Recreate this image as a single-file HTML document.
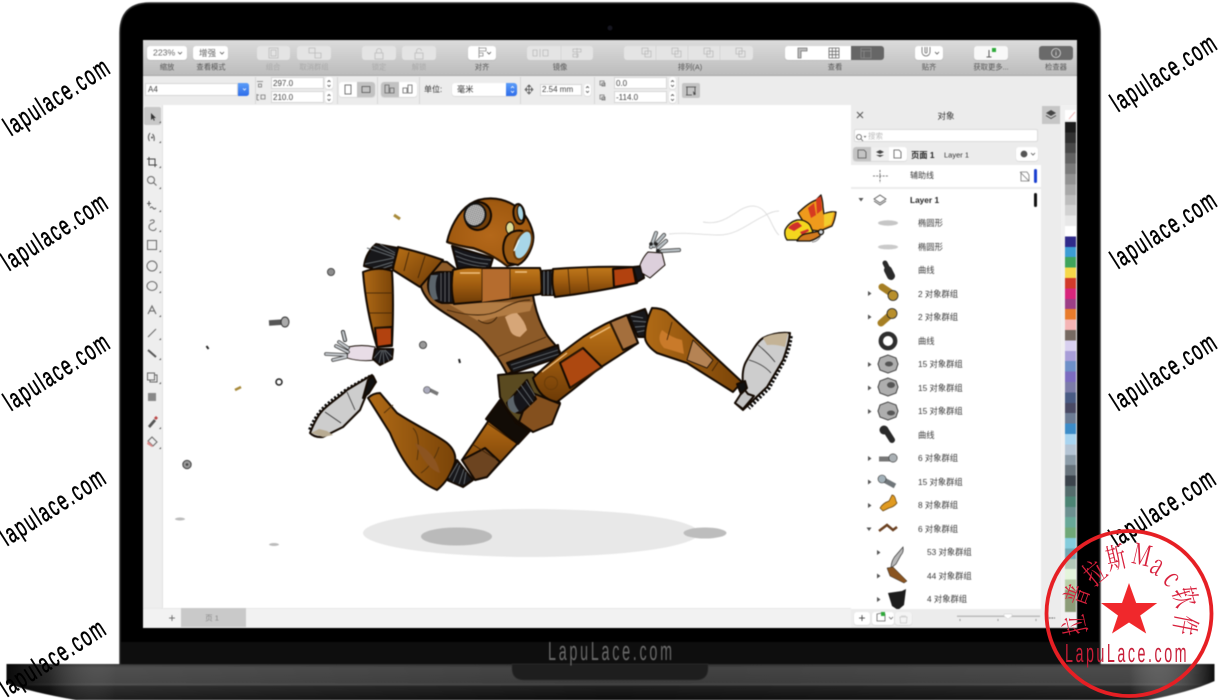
<!DOCTYPE html>
<html><head><meta charset="utf-8"><style>
html,body{margin:0;padding:0;background:#fff}
#p{position:relative;width:1221px;height:700px;overflow:hidden;background:#fff;font-family:"Liberation Sans","Noto Sans CJK SC",sans-serif}
#p div,#p span{position:absolute}
#ui{position:absolute;left:0;top:0;width:1221px;height:700px;filter:blur(.4px)}
.l,.c{line-height:1;white-space:nowrap;font-size:8.5px;color:#3a3a3a}
.l{transform:translateY(-50%)}
.c{transform:translate(-50%,-50%)}
.s{font-size:7.3px;color:#555}
.d{color:#a8a8a8}
.b{background:#f6f6f6;border-radius:3px;box-shadow:0 .5px 1px rgba(0,0,0,.15)}
.g{background:#e4e4e4;border-radius:3px}
.i{background:#fff;border:.5px solid #d6d6d6;box-sizing:border-box}
.v{background:#d8d8d8;width:1px}
svg{position:absolute;left:0;top:0}
</style></head><body><div id="p">
<div id="ui">
<svg width="1221" height="700" viewBox="0 0 1221 700">
<defs>
<linearGradient id="base" x1="0" y1="0" x2="0" y2="1">
<stop offset="0" stop-color="#2b2b2b"/><stop offset=".1" stop-color="#424242"/><stop offset=".52" stop-color="#3a3a3a"/><stop offset=".57" stop-color="#484848"/><stop offset=".62" stop-color="#1f1f1f"/><stop offset="1" stop-color="#0c0c0c"/>
</linearGradient>
<linearGradient id="lend" x1="0" y1="0" x2="1" y2="0">
<stop offset="0" stop-color="#000" stop-opacity=".85"/><stop offset=".035" stop-color="#000" stop-opacity=".35"/><stop offset=".09" stop-color="#fff" stop-opacity=".07"/><stop offset=".5" stop-color="#fff" stop-opacity="0"/><stop offset=".93" stop-color="#fff" stop-opacity=".05"/><stop offset="1" stop-color="#000" stop-opacity=".8"/>
</linearGradient>
</defs>
<path d="M6.5 664H1214.5V681Q1190 692 1148 700H76Q30 692 6.5 683Z" fill="url(#base)"/>
<path d="M6.5 664H1214.5V681Q1190 692 1148 700H76Q30 692 6.5 683Z" fill="url(#lend)"/>
<path d="M120 664V33Q120 3 150 3H1070Q1100 3 1100 33V664Z" fill="#000" stroke="#2c2c2c" stroke-width="1.500"/>
<rect x="121" y="642" width="978" height="22" fill="#0e0e0e"/>
<path d="M512 664H708V668Q708 680 696 680H524Q512 680 512 668Z" fill="#1e1e1e" stroke="#2e2e2e" stroke-width=".7"/>
<circle cx="610" cy="28" r="2.500" fill="#15151f"/>
</svg>

<!-- screen -->
<div style="left:143px;top:40px;width:934px;height:35px;background:linear-gradient(#dcdcdc,#bcbcbc)"></div>
<div style="left:143px;top:75px;width:934px;height:30px;background:#ececec;border-top:.5px solid #aaa;box-sizing:border-box"></div>
<div style="left:143px;top:105px;width:20px;height:503px;background:#eeeeee;border-right:1px solid #e2e2e2;box-sizing:border-box"></div>
<div style="left:163px;top:105px;width:688px;height:503px;background:#fff"></div>
<div style="left:143px;top:608px;width:708px;height:20px;background:#f2f2f2;border-top:1px solid #e8e8e8;box-sizing:border-box"></div>
<div style="left:181px;top:608px;width:65px;height:19px;background:#c9c9c9"></div>
<span class="c" style="left:172px;top:618px;font-size:12px;color:#666">+</span>
<span class="c d" style="left:212px;top:618px;font-size:7.5px;color:#888">页 1</span>
<div style="left:851px;top:105px;width:190px;height:523px;background:#fff"></div>
<div style="left:851px;top:105px;width:190px;height:20px;background:#ececec"></div>
<div style="left:851px;top:125px;width:190px;height:40px;background:#ececec"></div>
<div style="left:851px;top:187px;width:190px;height:2px;background:#ececec"></div>
<div style="left:1041px;top:105px;width:36px;height:523px;background:#ececec"></div>
<div style="left:1042px;top:106px;width:18px;height:18px;background:#c6c6c6"></div>
<div style="left:1061px;top:105px;width:16px;height:523px;background:#f0f0f0"></div>

<!-- toolbar buttons -->
<div class="b" style="left:147px;top:46px;width:40px;height:14px;background:#fff"></div>
<span class="l" style="left:153px;top:53px;font-size:8.7px;color:#666">223%</span>
<div class="b" style="left:193px;top:46px;width:35px;height:14px;background:#fff"></div>
<span class="l" style="left:199px;top:53px;font-size:8.5px;color:#666">增强</span>
<div class="g" style="left:257px;top:46px;width:33px;height:14px"></div>
<div class="g" style="left:297px;top:46px;width:34px;height:14px"></div>
<div class="g" style="left:362px;top:46px;width:34px;height:14px"></div>
<div class="g" style="left:402px;top:46px;width:34px;height:14px"></div>
<div class="b" style="left:468px;top:46px;width:28px;height:14px;background:#fff"></div>
<div class="g" style="left:527px;top:46px;width:66px;height:14px"></div>
<div class="g" style="left:624px;top:46px;width:129px;height:14px"></div>
<div class="b" style="left:785px;top:46px;width:66px;height:14px;background:#fff;border-radius:3px 0 0 3px"></div>
<div style="left:851px;top:46px;width:33px;height:14px;background:#666;border-radius:0 3px 3px 0"></div>
<div class="b" style="left:915px;top:46px;width:28px;height:14px;background:#fff"></div>
<div class="b" style="left:974px;top:46px;width:34px;height:14px;background:#f8f8f8"></div>
<div style="left:1039px;top:46px;width:34px;height:14px;background:#6a6a6a;border-radius:3px"></div>

<span class="c s" style="left:167px;top:67px">缩放</span>
<span class="c s" style="left:211px;top:67px">查看模式</span>
<span class="c s d" style="left:273px;top:67px">组合</span>
<span class="c s d" style="left:314px;top:67px">取消群组</span>
<span class="c s d" style="left:379px;top:67px">锁定</span>
<span class="c s d" style="left:419px;top:67px">解锁</span>
<span class="c s" style="left:482px;top:67px">对齐</span>
<span class="c s" style="left:560px;top:67px">镜像</span>
<span class="c s" style="left:690px;top:67px">排列(A)</span>
<span class="c s" style="left:835px;top:67px">查看</span>
<span class="c s" style="left:929px;top:67px">贴齐</span>
<span class="c s" style="left:991px;top:67px">获取更多...</span>
<span class="c s" style="left:1056px;top:67px">检查器</span>

<!-- property bar -->
<div class="i" style="left:145px;top:83px;width:93px;height:12.5px"></div>
<span class="l" style="left:148px;top:90px;font-size:8px;color:#444">A4</span>
<div style="left:238px;top:83px;width:11px;height:13px;background:linear-gradient(#5c9df8,#2e6dea);border-radius:0 2.5px 2.5px 0"></div>
<div class="v" style="left:255px;top:77px;height:27px"></div>
<div class="i" style="left:271px;top:77px;width:53px;height:12px"></div>
<div class="i" style="left:271px;top:91px;width:53px;height:12px"></div>
<span class="l" style="left:273px;top:83.5px;font-size:8px;color:#444">297.0</span>
<span class="l" style="left:273px;top:97.5px;font-size:8px;color:#444">210.0</span>
<div class="v" style="left:337px;top:77px;height:27px"></div>
<div class="b" style="left:339px;top:82px;width:36px;height:15px;background:#fff"></div>
<div style="left:357px;top:82px;width:18px;height:15px;background:#c2c2c2;border-radius:0 3px 3px 0"></div>
<div class="v" style="left:377px;top:77px;height:27px"></div>
<div class="b" style="left:381px;top:82px;width:36px;height:15px;background:#fff"></div>
<div style="left:381px;top:82px;width:18px;height:15px;background:#c2c2c2;border-radius:3px 0 0 3px"></div>
<div class="v" style="left:419px;top:77px;height:27px"></div>
<span class="l" style="left:424px;top:90px;font-size:8px;color:#333">单位:</span>
<div class="b" style="left:452px;top:83px;width:65px;height:13px;background:#fff"></div>
<span class="l" style="left:457px;top:90px;font-size:8.2px;color:#333">毫米</span>
<div style="left:506px;top:83px;width:11px;height:13px;background:linear-gradient(#5c9df8,#2e6dea);border-radius:0 3px 3px 0"></div>
<div class="v" style="left:520px;top:77px;height:27px"></div>
<div class="i" style="left:540px;top:84px;width:42px;height:12px"></div>
<span class="l" style="left:542px;top:90px;font-size:8px;color:#444">2.54 mm</span>
<div class="v" style="left:594px;top:77px;height:27px"></div>
<div class="i" style="left:614px;top:77px;width:53px;height:12px"></div>
<div class="i" style="left:614px;top:91px;width:53px;height:12px"></div>
<span class="l" style="left:616px;top:83.5px;font-size:8px;color:#444">0.0</span>
<span class="l" style="left:616px;top:97.5px;font-size:8px;color:#444">-114.0</span>
<div class="v" style="left:678px;top:77px;height:27px"></div>
<div style="left:682px;top:83px;width:18px;height:15px;background:#c4c4c4;border-radius:2px"></div>
<div class="b" style="left:325px;top:77px;width:8px;height:12px;background:#fff"></div>
<div class="b" style="left:325px;top:91px;width:8px;height:12px;background:#fff"></div>
<div class="b" style="left:584px;top:84px;width:7px;height:12px;background:#fff"></div>
<div class="b" style="left:669px;top:77px;width:7px;height:12px;background:#fff"></div>
<div class="b" style="left:669px;top:91px;width:7px;height:12px;background:#fff"></div>

<!-- toolbox selected -->
<div style="left:144px;top:107px;width:17px;height:18px;background:#c8c8c8;border-radius:2px"></div>

<!-- docker -->
<span class="c" style="left:946px;top:115.5px;font-size:8.5px;color:#333">对象</span>
<div style="left:854px;top:129px;width:184px;height:13px;background:#fff;border:.5px solid #dadada;box-sizing:border-box;border-radius:2px"></div>
<span class="l" style="left:868px;top:136px;font-size:7.5px;color:#bbb">搜索</span>
<div class="b" style="left:853px;top:147px;width:54px;height:14px;background:#fff"></div>
<div style="left:853px;top:147px;width:18px;height:14px;background:#c4c4c4;border-radius:3px 0 0 3px"></div>
<div style="left:871px;top:147px;width:18px;height:14px;background:#f0f0f0"></div>
<span class="l" style="left:911px;top:155px;font-size:8.3px;font-weight:bold;color:#222">页面 1</span>
<span class="l" style="left:944px;top:155px;font-size:7.5px;color:#333">Layer 1</span>
<div class="b" style="left:1016px;top:147px;width:22px;height:14px;background:#fff"></div>
<span class="l" style="left:910px;top:176px;font-size:8px">辅助线</span>
<div style="left:1034px;top:169px;width:3px;height:14px;background:#1a3fd0;border-radius:2px"></div>
<span class="l" style="left:910px;top:200px;font-size:8.3px;font-weight:bold;color:#222">Layer 1</span>
<div style="left:1034px;top:193px;width:3px;height:14px;background:#111;border-radius:2px"></div>
<span class="l" style="left:918px;top:223px;font-size:8.3px">椭圆形</span>
<span class="l" style="left:918px;top:246.500px;font-size:8.3px">椭圆形</span>
<span class="l" style="left:918px;top:270px;font-size:8.3px">曲线</span>
<span class="l" style="left:918px;top:293.500px;font-size:8.3px">2 对象群组</span>
<span class="l" style="left:918px;top:317px;font-size:8.3px">2 对象群组</span>
<span class="l" style="left:918px;top:340.500px;font-size:8.3px">曲线</span>
<span class="l" style="left:918px;top:364px;font-size:8.3px">15 对象群组</span>
<span class="l" style="left:918px;top:387.500px;font-size:8.3px">15 对象群组</span>
<span class="l" style="left:918px;top:411px;font-size:8.3px">15 对象群组</span>
<span class="l" style="left:918px;top:434.500px;font-size:8.3px">曲线</span>
<span class="l" style="left:918px;top:458px;font-size:8.3px">6 对象群组</span>
<span class="l" style="left:918px;top:481.500px;font-size:8.3px">15 对象群组</span>
<span class="l" style="left:918px;top:505px;font-size:8.3px">8 对象群组</span>
<span class="l" style="left:918px;top:528.500px;font-size:8.3px">6 对象群组</span>
<span class="l" style="left:927px;top:552px;font-size:8.3px">53 对象群组</span>
<span class="l" style="left:927px;top:575.500px;font-size:8.3px">44 对象群组</span>
<span class="l" style="left:927px;top:599px;font-size:8.3px">4 对象群组</span>

<!-- palette -->
<div style="left:1065px;top:110px;width:11px;height:10px;background:#fff"></div>
<div style="left:1065px;top:122px;width:11px;height:490px;background:linear-gradient(#1a1a1a 0 10.4px,#303030 0 20.8px,#484848 0 31.2px,#626262 0 41.6px,#7a7a7a 0 52px,#929292 0 62.4px,#a8a8a8 0 72.8px,#bdbdbd 0 83.2px,#d2d2d2 0 93.6px,#e8e8e8 0 104px,#ffffff 0 114.4px,#2f2a8a 0 124.8px,#3c9dd4 0 135.2px,#3fa45c 0 145.6px,#f6d84a 0 156px,#d23a2a 0 166.4px,#d8257c 0 176.8px,#9c3e86 0 187.2px,#e87c2c 0 197.6px,#f4b4b4 0 208px,#766a62 0 218.4px,#d8d0f0 0 228.8px,#a89ed8 0 239.2px,#6e90c8 0 249.6px,#7c6cc0 0 260px,#7c7ca8 0 270.4px,#4a5c84 0 280.8px,#4a4a64 0 291.2px,#6c7c94 0 301.6px,#3c8cc8 0 312px,#a8d4f0 0 322.4px,#b4c4d4 0 332.8px,#8c9ca8 0 343.2px,#68747c 0 353.6px,#3c444c 0 364px,#546c6c 0 374.4px,#4c8474 0 384.8px,#6c9090 0 395.2px,#68a898 0 405.6px,#70a878 0 416px,#84ccdc 0 426.4px,#70a8b4 0 436.8px,#b4c8b8 0 447.2px,#e4f4dc 0 457.6px,#b8d0a8 0 468px,#8c9c78 0 490px)"></div>

<svg width="1221" height="700" viewBox="0 0 1221 700">
<defs>
<linearGradient id="g1" x1="0" y1="0" x2="0" y2="1"><stop offset="0" stop-color="#c27a1c"/><stop offset=".45" stop-color="#a25e10"/><stop offset="1" stop-color="#6c3a06"/></linearGradient>
<linearGradient id="g2" x1="0" y1="0" x2="1" y2="0"><stop offset="0" stop-color="#b06a16"/><stop offset="1" stop-color="#7a4408"/></linearGradient>
<linearGradient id="g3" x1="0" y1="0" x2="1" y2="1"><stop offset="0" stop-color="#b87016"/><stop offset="1" stop-color="#6a3806"/></linearGradient>
<radialGradient id="hg" cx=".5" cy=".55" r=".65"><stop offset="0" stop-color="#b4681a"/><stop offset=".75" stop-color="#a15a10"/><stop offset="1" stop-color="#7a4408"/></radialGradient>
<pattern id="mesh" width="2" height="2" patternUnits="userSpaceOnUse"><rect width="2" height="2" fill="#8a8a8a"/><rect width="1.200" height="1.200" fill="#dedede"/></pattern>
</defs>

<!-- toolbar icons -->
<g fill="none" stroke="#8c8c8c" stroke-width=".8">
<path d="M182 52l-2 2-2-2M224 52l-2 2-2-2M491 52l-2 2-2-2M939 52l-2 2-2-2" stroke="#555"/>
<g stroke="#bcbcbc"><rect x="269" y="48" width="9" height="10"/><rect x="271" y="50" width="5" height="6"/>
<path d="M309 48h6v5h-6zM315 53h6v5h-6z"/><rect x="375" y="53" width="8" height="6"/><path d="M376.500 53v-2a2.500 2.500 0 0 1 5 0v2"/>
<rect x="415" y="53" width="8" height="6"/><path d="M416.500 53v-2a2.500 2.500 0 0 1 5 0"/>
<path d="M540 49v8M543 50h5v6h-5zM537 50h-4v6h4zM577 48v10M573 49h8v3h-8zM573 54h5v3h-5z"/>
<path d="M561 46v14" stroke="#d2d2d2"/>
<path d="M642 48h6v6h-6zM645 51h6v6h-6zM672 48h6v6h-6zM675 51h6v6h-6zM704 48h6v6h-6zM707 51h6v6h-6zM736 48h6v6h-6zM739 51h6v6h-6z"/>
<path d="M656 46v14M688 46v14M720 46v14" stroke="#d2d2d2"/></g>
<path d="M479 47v11M479 48h7v3h-7zM479 53h4v3h-4z"/>
<path d="M798 48h9v3h-6v7h-3z" fill="#bbb" stroke="#777"/>
<path d="M829 48h10v10h-10zM829 51.300h10M829 54.700h10M832.300 48v10M835.700 48v10" stroke="#666"/>
<path d="M861 48h10v10h-10zM861 51h10M864 51v7" stroke="#8a8a8a"/>
<path d="M922 47v5a4 4 0 0 0 8 0v-5M925 47v5a1 1 0 0 0 2 0v-5" stroke="#666"/>
<path d="M989 50v7M986.500 57h5" stroke="#333"/>
<circle cx="1056" cy="53" r="4.500" stroke="#ddd"/><path d="M1056 52v3.500M1056 50.500v.8" stroke="#ddd"/>
</g>
<rect x="992" y="48" width="4" height="4" fill="#2eaa3a"/>
<!-- property bar icons -->
<g fill="none" stroke="#777" stroke-width=".8">
<path d="M243 88.500l1.500 1.500 1.500-1.500" stroke="#fff"/>
<path d="M511 88l1.500-1.500 1.500 1.500M511 91l1.500 1.500 1.500-1.500" stroke="#fff"/>
<path d="M257 81.500h6M258.500 84h3v3h-3zM257 94v6M259 95h-2M259 100h-2M261 95h4v4h-4z"/>
<path d="M327.500 82l1.500-1.500 1.500 1.500M327.500 85l1.500 1.500 1.500-1.500M327.500 96l1.500-1.500 1.500 1.500M327.500 99l1.500 1.500 1.500-1.500M586 88l1.500-1.500 1.500 1.500M586 91l1.500 1.500 1.500-1.500M671 82l1.500-1.500 1.500 1.500M671 85l1.500 1.500 1.500-1.500M671 96l1.500-1.500 1.500 1.500M671 99l1.500 1.500 1.500-1.500" stroke="#555"/>
<rect x="345" y="85" width="6" height="9" stroke="#555"/><rect x="362" y="86.500" width="8" height="6" stroke="#555"/>
<path d="M385 85h4v8h-4zM390 88h4v5h-4zM403 88h4v5h-4zM408 85h4v8h-4z" stroke="#666"/>
<path d="M529 86.500v6M526 89.500h6M529 85l-1.500 1.500h3zM529 94l-1.500-1.500h3zM525 89.500l1.500-1.500v3zM533 89.500l-1.500-1.500v3z" stroke="#555"/>
<path d="M600 81h4v4h-4zM602 83h3v3h-3zM600 95h4v4h-4zM602 97h3v3h-3z"/>
<path d="M686 87h10M687 87v8M695 87v8M686 95h6" stroke="#444"/><path d="M693 91l3 3-1.500.2-.8 1.300z" fill="#444" stroke="none"/>
</g>

<!-- toolbox icons -->
<g fill="none" stroke="#666" stroke-width="1">
<path d="M151 113l0 7 1.800-1.600 1 2.400 1-.4-1-2.400 2.200 0z" fill="#333" stroke="none"/>
<path d="M150 133q-3 4-.5 8M154 141q1-4-1.500-7" stroke="#555"/><circle cx="152" cy="137.500" r="1" fill="#555" stroke="none"/>
<path d="M149 157v8h8M147 159h8v8" stroke="#444"/>
<circle cx="151" cy="180" r="3.500"/><path d="M153.500 182.500l3 3"/>
<path d="M149 201v5M147 203.500h4M150 208q2-2 3 0t3 0" stroke="#555"/>
<path d="M156 228c0 4-7 3-7-1s4-3 5-5-2-3-4-1"/>
<rect x="147.500" y="240.500" width="9" height="9"/>
<circle cx="152" cy="266" r="5"/>
<ellipse cx="152" cy="286" rx="5" ry="4.500"/>
<path d="M148 314l4-8 4 8M149.500 311h5" stroke-width="1.100"/>
<path d="M148 337l8-8"/>
<path d="M148 350l8 7" stroke-width="2" stroke="#555"/>
<rect x="147.500" y="373" width="7" height="7" fill="#eee"/><path d="M155 375h2v7h-7v-2" />
<rect x="148" y="393" width="8" height="8" fill="#888" stroke="none"/>
<path d="M148 426l6-7 2 2-6 7z" fill="#555" stroke="none"/><path d="M154 418l2-2 2 2-2 2" fill="#b44" stroke="none"/>
<path d="M152 437l5 5-4 4-5-5z" fill="#eee"/><path d="M148 441l5 5-1 1-5-3z" fill="#d88" stroke="none"/>
</g>
<g fill="#555">
<path d="M161 123v-2l-2 2zM161 143v-2l-2 2zM161 168v-2l-2 2zM161 189v-2l-2 2zM161 212v-2l-2 2zM161 232v-2l-2 2zM161 252v-2l-2 2zM161 273v-2l-2 2zM161 293v-2l-2 2zM161 317v-2l-2 2zM161 340v-2l-2 2zM161 360v-2l-2 2zM161 384v-2l-2 2zM161 429v-2l-2 2zM161 449v-2l-2 2z"/>
</g>

<!-- docker icons -->
<path d="M857 112l6 6M863 112l-6 6" stroke="#555" fill="none"/>
<g fill="none" stroke="#555" stroke-width=".8">
<circle cx="859" cy="137" r="2.500"/><path d="M861 139l2 2M864 136l1 1 1-1"/>
<path d="M858 150h6l2 2v6h-8z"/><path d="M876 152l4-2 4 2-4 2zM876 155l4 2 4-2" fill="#444" stroke="none"/><path d="M894 150h5l2 2v6h-7z"/>
<circle cx="1024" cy="154" r="3" fill="#555"/><path d="M1031 153l2 2 2-2"/>
<path d="M873 176h15M880 170v13" stroke-dasharray="2 1.200"/>
<path d="M1021 172h6l2 3v6h-8zM1020 172l9 9" stroke="#777"/>
<path d="M874 199l6-4 6 4-6 4zM874 201l6 4 6-4" stroke="#555"/>
<path d="M1069 119l6-7" stroke="#e8a0a0"/>
<path d="M1046 113l5-3 5 3-5 3z" fill="#444" stroke="none"/><path d="M1046 115.500l5 3 5-3" stroke="#444"/>
</g>
<path d="M858.500 198h5l-2.500 3.500z" fill="#555"/>
<g fill="#555">
<path d="M868 291v5l3.500-2.500zM868 314.500v5l3.500-2.500zM868 362v5l3.500-2.500zM868 385.500v5l3.500-2.500zM868 409v5l3.500-2.500zM868 456v5l3.500-2.500zM868 479.500v5l3.500-2.500zM868 503v5l3.500-2.500zM877 550v5l3.500-2.500zM877 573.500v5l3.500-2.500zM877 597v5l3.500-2.500z"/>
<path d="M866.500 527.500h5l-2.500 3.500z"/>
</g>

<!-- thumbnails -->
<ellipse cx="888" cy="223" rx="10" ry="2.700" fill="#c6c6c6"/>
<ellipse cx="888" cy="247" rx="10" ry="2.400" fill="#cacaca"/>
<path d="M885 263l3 6" stroke="#2a2a2a" stroke-width="5" stroke-linecap="round"/><path d="M888 270l3 6" stroke="#2a2a2a" stroke-width="8" stroke-linecap="round"/>
<path d="M882 287l9 6" stroke="#a67f24" stroke-width="7" stroke-linecap="round"/><circle cx="893" cy="295.500" r="5" fill="#b88f2c" stroke="#222" stroke-width=".8"/>
<path d="M881 323l8-7" stroke="#a67f24" stroke-width="7" stroke-linecap="round"/><circle cx="892" cy="313.500" r="5" fill="#b88f2c" stroke="#222" stroke-width=".8"/>
<circle cx="888" cy="341" r="7.200" fill="none" stroke="#2d2d2d" stroke-width="4.400"/>
<g fill="#aeaeae" stroke="#333" stroke-width=".9">
<path d="M888 355l8 3 2 6-2 6-8 3-8-3-2-6 2-6z"/><path d="M888 378l8 3 2 6-2 6-8 3-8-3-2-6 2-6z"/><path d="M888 402l8 3 2 6-2 6-8 3-8-3-2-6 2-6z"/>
</g>
<g fill="#555"><ellipse cx="889" cy="364" rx="4" ry="2.500"/><ellipse cx="891" cy="385" rx="4" ry="3"/><ellipse cx="891" cy="413" rx="4" ry="2.500"/></g>
<path d="M885 429l7 11" stroke="#2a2a2a" stroke-width="6" stroke-linecap="round"/><circle cx="884" cy="430" r="4.500" fill="#2a2a2a"/>
<path d="M879 459h12" stroke="#777" stroke-width="5"/><circle cx="893" cy="458" r="4.200" fill="#aab0b4" stroke="#333" stroke-width=".6"/>
<path d="M884 480l11 6" stroke="#70767a" stroke-width="5"/><circle cx="882" cy="479" r="4" fill="#a2b0b8" stroke="#333" stroke-width=".6"/>
<path d="M880 508q3-5 9-7l3-6q3 0 4 6l1 2q-3 4-8 5l-6 3z" fill="#e09a20" stroke="#5b3a0a" stroke-width=".7"/>
<path d="M879 531l8-6 6 5 4-3" stroke="#6a4020" stroke-width="2.500" fill="none"/>
<path d="M891 568q0-8 6-14l6-7q1 5-2 8l-5 9z" fill="#b8b8b8" stroke="#333" stroke-width=".7"/>
<path d="M887 568l6-1 14 14-3 2-14-7z" fill="#8a5420" stroke="#222" stroke-width=".5"/>
<path d="M888 593l14-2 4-2-2 16-6 5-6-4z" fill="#1c1c1c"/>

<!-- shadows -->
<ellipse cx="531" cy="533" rx="168" ry="24" fill="#e8e8e8"/>
<ellipse cx="456.500" cy="536.500" rx="35.500" ry="9" fill="#bababa"/>
<ellipse cx="705" cy="533" rx="21.500" ry="5.500" fill="#bdbdbd"/>
<ellipse cx="180" cy="519" rx="5" ry="1.500" fill="#bbb"/>
<ellipse cx="274" cy="544.500" rx="5" ry="1.500" fill="#bbb"/>

<!-- debris -->
<path d="M269 323l15-1" stroke="#555" stroke-width="5.500"/><ellipse cx="285" cy="322" rx="4" ry="5" fill="#aaa" stroke="#333"/>
<path d="M394 215l6 4" stroke="#a88a3a" stroke-width="3"/>
<circle cx="331" cy="272" r="3.600" fill="#8c8c8c" stroke="#333" stroke-width=".8"/>
<path d="M206.500 346l2 3" stroke="#222" stroke-width="2"/>
<path d="M235 390l6-3" stroke="#a88a3a" stroke-width="2.500"/>
<circle cx="279" cy="382" r="3" fill="none" stroke="#222" stroke-width="1.500"/>
<path d="M430 390l8 4" stroke="#777" stroke-width="3.500"/><circle cx="427" cy="390" r="3.500" fill="#aab" stroke="#444" stroke-width=".6"/>
<circle cx="423" cy="345" r="3.600" fill="#999" stroke="#333" stroke-width=".8"/>
<path d="M459 359l1 4" stroke="#222" stroke-width="2"/>
<circle cx="187" cy="464.500" r="4.200" fill="#999" stroke="#333" stroke-width=".9"/>
<circle cx="187" cy="464.500" r="1.300" fill="#444"/>

<!-- butterfly swirls -->
<path d="M688 234c20-2 30 1 50 1 18 0 30-12 45-19 5-3 10-5 15-5" fill="none" stroke="#dcdcdc" stroke-width=".9" transform="translate(-19 0)"/>
<path d="M703 222c15 3 25-4 37-12 12-7 22-5 29 8 4 8 7 15 10 17" fill="none" stroke="#dcdcdc" stroke-width=".9"/>

<!-- butterfly -->
<g stroke="#17120a" stroke-width="1.300" stroke-linejoin="round">
<path d="M798 213q10-10 18-13l5-5q2 7 2 12l1 7q6-3 12-2-1 8-4 14l-12 5-10-1q-7-8-12-17z" fill="#ef9a1c"/>
<path d="M816 199l5-3 1 14-5 4zM808 208l6-5 2 12-5 3z" fill="#d63a20" stroke="none"/>
<path d="M824 214l10-2-3 12-7 3z" fill="#f2cd2c" stroke="none"/>
<path d="M785 230q4-8 12-10 8-1 13 5l3 7-16 8-10 0q-3-4-2-10z" fill="#f4d61e"/>
<path d="M788 228q4-5 10-6l4 4-8 5zM800 232l8-3 1 2-7 4z" fill="#cf2f2a" stroke="none"/>
<path d="M797 241q3-6 8-7l15-3 2 3q-5 5-12 7z" fill="#d27a1e"/>
<circle cx="821" cy="232" r="2.500" fill="#cfd6dd"/>
<path d="M812 242q6 0 9-7" fill="none" stroke="#777" stroke-width=".9"/>
</g>

<!-- ROBOT -->
<g stroke="#140a02" stroke-width="2" stroke-linejoin="round">

<!-- left rear leg (lower) + foot -->
<path d="M368 398q5-5 12-5l17 20c18 12 40 22 50 30 7 6 9 13 8 19-3 10-8 20-18 28-12-5-19-12-24-17-11-13-18-28-23-40z" fill="url(#g2)"/>
<path d="M384 413l9-8M413 428q8 8 4 32M421 473q12-8 18-26" fill="none" stroke="#51300a" stroke-width=".9"/>
<path d="M415 443q20 8 25 30-14-4-25-30z" fill="#8c5420" stroke="none"/>
<!-- foot left: teeth first -->
<path d="M310.500 430c3-8 8-15 12-20 8-8 20-17 30-23l18-10" fill="none" stroke="#0c0c0c" stroke-width="5" stroke-dasharray="2.200 1.800"/>
<path d="M310 433c4-10 8-18 13-23 8-8 18-14 24-20l25-15 3 7-8 11-7 17-17 17-20 10q-8 1-13-4z" fill="#cdcdcd" stroke-width="2"/>
<path d="M311 433l8-4 8 2 6 4-10 2z" fill="#b8ab92" stroke="none"/>
<path d="M325 412l16 11M347 392l8 18" fill="none" stroke="#333" stroke-width=".8"/>
<path d="M368 380l5-4 3 6-7 11-6 5z" fill="#111"/>

<!-- left knee ruffle -->
<path d="M447 480l10-20 16 20-10 7z" fill="#17171a"/>
<path d="M449 478l9-15M453 482l7-17M459 484l5-15M464 484l2-12" fill="none" stroke="#666c70" stroke-width=".9"/>

<!-- left thigh -->
<path d="M501 400l16 23 13 7-43 47-12 3-13-20 25-37z" fill="url(#g1)"/>
<path d="M475 480l-13-20 23-12 15 14-13 15z" fill="#6c4420"/>
<path d="M487 423l26 18M472 444l24 15" fill="none" stroke="#3a2006" stroke-width=".8"/>
<path d="M500 400l16 23 14 8-12 13-19-15-13-10z" fill="#120c06"/>

<!-- pelvis -->
<path d="M498 375l35-3 27 31c-6 14-14 25-27 27-12-3-23-14-33-33z" fill="#5a4a20"/>
<path d="M530 392l30 12-8 20-19 8-14-10z" fill="#84501e"/>

<!-- torso -->
<path d="M420 280c0-12 12-20 27-18l10 8h76c-3 20 2 45 14 65 5 7 11 12 13 17l-53 22c-7-14-17-28-29-39-16-13-38-23-48-33-6-7-10-14-10-22z" fill="#8c5a28"/>
<path d="M447 303l86-1-3 9-33 6-17 5z" fill="#b27c44" stroke="none"/>
<path d="M447 310q35 10 53 0 16-10 30-10M478 320q12 8 19-3M497 357l49-20M480 337q8 10 16 20" fill="none" stroke="#3a2006" stroke-width=".9"/>
<path d="M505 317q6-4 12-4 8 8 10 17l-7 7q-8-1-10-7z" fill="#d6a678" stroke="none"/>
<path d="M507 363l51-18 2 12-47 16z" fill="#17171a"/>
<path d="M511 365l47-15M513 369l46-15" stroke="#666c70" stroke-width=".9" fill="none"/>

<!-- neck -->
<path d="M452 246l41 12-4 13-31-1z" fill="#15151a"/>
<path d="M455 251q18 8 36 9M456 256q16 7 32 8M458 261q14 5 28 6" stroke="#666c70" stroke-width=".9" fill="none"/>

<!-- rear arm: shoulder plate -->
<path d="M398 247q22 5 45 13l-23 27-27-17q1-12 5-23z" fill="url(#g3)"/>
<path d="M409 252l-5 19M425 256l-7 22" fill="none" stroke="#3a2006" stroke-width=".8"/>

<!-- left shoulder ruffle -->
<path d="M393 268l-16 2-13-4q2-14 12-22l22 4z" fill="#17171a"/>
<path d="M394 258l-29 6M394 257l-27-9M395 255l-22-9M395 253l-15-9M393 262l-20 6M392 265l-11 4" stroke="#666c70" stroke-width="1" fill="none"/>

<!-- left forearm -->
<path d="M363 272q15-6 29-1 2 30 0 75l-15 1q-11-37-14-75z" fill="url(#g2)"/>
<path d="M375 328l17-1v18l-15 2z" fill="#b2420f"/>
<path d="M366 293h27M369 313h24M375 328h17" fill="none" stroke="#3a2006" stroke-width=".8"/>

<!-- left hand -->
<g stroke-width=".9">
<path d="M348 347q14-3 27 0v13q-14 2-28-2z" fill="#e8dde6"/>
<path d="M345 340l-2-8" stroke="#111" stroke-width="4" stroke-linecap="round"/><path d="M345 340l-2-8" stroke="#bfc4c8" stroke-width="2.500" stroke-linecap="round" fill="none"/>
<path d="M348 348l-9-6M348 352l-12-6M346 355l-20-1M346 357l-13 3" stroke="#222" stroke-width="3.600" stroke-linecap="round"/>
<path d="M348 348l-9-6M348 352l-12-6M346 355l-20-1M346 357l-13 3" stroke="#c4c8cc" stroke-width="2.300" stroke-linecap="round" fill="none"/>
</g>
<path d="M375 349l18 0-1 10-12 6-7-6z" fill="#15151a"/>
<path d="M381 350l-7 8M382 350l-3 13M383 350l1 14M384 350l5 11M385 350l7 7" stroke="#666c70" stroke-width=".9" fill="none"/>

<!-- shoulder socket -->
<path d="M428 285c0-9 5-13 12-13h14v31h-12c-8-2-14-9-14-18z" fill="#15151a"/>
<path d="M431 275c-3 8-3 20 3 25l4-1c-3-8-3-18 0-24z" fill="#5b646b" stroke="none"/>
<path d="M441 273v28M445 272v30M449 272v30" stroke="#666" stroke-width=".9" fill="none"/>

<!-- upper arm -->
<path d="M453 270q14-4 30-2l57 0q4 12 1 26l-40 6-47 4q-4-16-1-34z" fill="url(#g1)"/>
<path d="M482 269h28l1 29-29 4z" fill="#b56c2e" stroke="none"/>
<path d="M482 268v33M510 268v30" stroke="#3a2006" stroke-width=".8" fill="none"/>
<path d="M460 273h20M515 272h12" stroke="#f0c080" stroke-width="1.500" fill="none"/>

<!-- elbow ruffle -->
<path d="M541 271l14-1 1 25-14 0z" fill="#17171a"/>
<path d="M544 271v24M548 271v24M552 271v24" stroke="#666c70" stroke-width="1" fill="none"/>

<!-- right forearm -->
<path d="M553 269q40-3 80-2l4 16q-40 9-82 14c-3-9-3-20-2-28z" fill="url(#g1)"/>
<path d="M613 269l20-2 3 16-22 4z" fill="#b2420f"/>
<path d="M568 268l2 26M587 267l2 24" fill="none" stroke="#3a2006" stroke-width=".8"/>

<!-- right wrist + hand -->
<path d="M633 267l9-1 2 12-7 4z" fill="#17171a"/>
<path d="M640 265q3-8 8-13l14 1 3 12-15 13-8-5z" fill="#dccfdb" stroke-width="1"/>
<g stroke-linecap="round">
<path d="M651 247l5-14M654 246l10-11M658 248l8-7M662 251l17-1" stroke="#333" stroke-width="4" fill="none"/>
<path d="M651 247l5-14M654 246l10-11M658 248l8-7M662 251l17-1" stroke="#b9c0c4" stroke-width="2.600" fill="none"/>
<circle cx="651" cy="244" r="1.800" fill="#222" stroke="none"/><circle cx="656" cy="244" r="1.800" fill="#222" stroke="none"/><circle cx="658" cy="251" r="2" fill="#222" stroke="none"/>
</g>

<!-- front thigh -->
<path d="M533 378C545 366 565 350 583 337 598 327 612 320 627 315L638 343C625 352 610 361 597 370 585 380 570 392 557 402 545 400 537 392 533 378Z" fill="url(#g1)"/>
<path d="M560 363l23-15 19 19-32 21z" fill="#ad4810"/>
<path d="M610 322l17-7 11 28-15 7z" fill="#a46f3d"/>
<circle cx="551" cy="383" r="6.500" fill="none" stroke="#6a3c08" stroke-width="1"/>
<path d="M583 348l-22 15M602 367l-32 21M610 322l13 28" fill="none" stroke="#3a2006" stroke-width=".8"/>
<path d="M542 372l25-19M590 338l20-11" stroke="#f0c080" stroke-width="1.300" fill="none"/>

<!-- hip socket -->
<path d="M507 403l20-23 9 19-15 14c-6 0-12-4-14-10z" fill="#15151a"/>
<path d="M508 400c-2 5 2 12 7 13l4-2c-4-5-6-10-5-16z" fill="#5b646b" stroke="none"/>
<path d="M517 389l13 17M521 385l12 17M526 381l9 15" stroke="#666c70" stroke-width=".9" fill="none"/>

<!-- knee ruffle -->
<path d="M628 315l17-6 5 13-5 15-7 0z" fill="#17171a"/>
<path d="M631 316l12 2M633 321l14 1M635 327l13-1M637 332l10-2" stroke="#666c70" stroke-width="1" fill="none"/>

<!-- front lower leg -->
<path d="M652 308c6 0 11 1 15 4l30 28 45 42-9 10-46-29-30-10c-6-4-12-10-12-16 0-10 3-20 7-29z" fill="url(#g2)"/>
<path d="M693 340l20 20-6 8-20-8z" fill="#b58354" stroke-width=".8"/>
<path d="M662 330q10 8 20 10l2 14-20-6q-8-8-2-18z" fill="#c97a2a" stroke="none"/>
<path d="M672 322l-5 18M718 362l-6 9" stroke="#3a2006" stroke-width=".8" fill="none"/>

<!-- right foot: teeth first -->
<path d="M790.500 336c-1 10-4 18-7 25l-15 27-20 20" fill="none" stroke="#0c0c0c" stroke-width="4.500" stroke-dasharray="2.200 1.800"/>
<path d="M743 383c-1-8 0-17 4-23 5-9 10-18 16-22 8-4 18-6 27-5-1 10-4 19-7 27l-16 27-24 23-8-7 10-13z" fill="#cdcdcd" stroke-width="2"/>
<path d="M763 338c7-4 16-5 25-5l-3 14q-9-3-18-2z" fill="#c4b396" stroke="none"/>
<path d="M749 360q14 4 22 13M758 345q10 8 17 17" fill="none" stroke="#333" stroke-width=".8"/>
<path d="M735 403l9-14 4 5 6 2-11 13z" fill="#c4c4c4"/>
<path d="M737 384l8-3 2 7-6 6z" fill="#111"/>

<!-- helmet -->
<path d="M447 242c3-14 11-30 23-38 12-8 30-7 42 0 10 5 18 16 21 29 2 12-5 25-15 31l-11 2c-10-8-22-14-34-18q-15-2-26-6z" fill="url(#hg)"/>
<path d="M448 243q14 4 26 6c12 4 24 10 34 17" fill="none" stroke="#3a2006" stroke-width="1.200"/>
<ellipse cx="478" cy="216" rx="13" ry="14" transform="rotate(15 478 216)" fill="#74400a"/>
<ellipse cx="475" cy="215" rx="10.500" ry="11.500" transform="rotate(20 475 215)" fill="url(#mesh)" stroke="#111" stroke-width="1.800"/>
<ellipse cx="519" cy="214" rx="5.500" ry="10" transform="rotate(-8 519 214)" fill="#8c5010"/>
<ellipse cx="520.500" cy="213" rx="3" ry="7.500" transform="rotate(-8 520.500 213)" fill="#a8d6e6" stroke-width="1"/>
<ellipse cx="510" cy="228" rx="4" ry="6" fill="#dedd98" stroke-width="1"/>
<path d="M506 237c6-8 16-7 18-5l9 3c1 10-5 25-15 30l-10-2c-6-8-6-18-2-26z" fill="#9a5a14"/>
<ellipse cx="523" cy="245" rx="7.500" ry="15" transform="rotate(22 523 245)" fill="#a8d6e8" stroke="#6a3a08" stroke-width="2"/>
<path d="M519 240l-5 11" stroke="#e6f6fa" stroke-width="1.500"/>
</g>
</svg>

<!-- docker footer (covers rows) -->
<div style="left:851px;top:609px;width:190px;height:19px;background:#ececec"></div>
<div class="b" style="left:854px;top:612px;width:16px;height:13px;background:#fff"></div>
<div class="b" style="left:872px;top:612px;width:22px;height:13px;background:#fff"></div>
<div class="b" style="left:895px;top:612px;width:17px;height:13px;background:#f4f4f4"></div>
<span class="c" style="left:862px;top:618px;font-size:12px;color:#444">+</span>
<svg width="1221" height="700" viewBox="0 0 1221 700">
<g fill="none" stroke="#666" stroke-width=".8">
<path d="M877 614l5-1 3 1v7h-8zM889 617l2 2 2-2"/>
<path d="M901 616h5M900 617h7l-.5 6h-6z" stroke="#c8c8c8"/>
</g>
<rect x="881" y="612" width="4" height="4" fill="#2eaa3a"/>
<rect x="957" y="615.500" width="83" height="1.500" fill="#bbb"/>
<path d="M1004 614h8v2l-4 3-4-3z" fill="#fff" stroke="#ccc" stroke-width=".5"/>
<path d="M960 619v2M998 619v2M1036 619v2" stroke="#999" fill="none"/>
<path d="M1049 618h6" stroke="#555" stroke-dasharray="1.500 1" fill="none"/>
<text transform="translate(548 660) scale(.55 1)" fill="#6a6a6a" font-family="Liberation Sans" font-size="26" letter-spacing="5">LapuLace.com</text>
</svg>
</div>

<svg width="1221" height="700" viewBox="0 0 1221 700" style="z-index:5">
<g font-family="Liberation Sans,sans-serif" font-size="27" fill="#000" stroke="#000" stroke-width=".6" letter-spacing="3" text-anchor="middle">
<text transform="translate(62 104) rotate(-32.500) scale(.62 1)">lapulace.com</text>
<text transform="translate(60 239) rotate(-32.500) scale(.62 1)">lapulace.com</text>
<text transform="translate(62 379) rotate(-32.500) scale(.62 1)">lapulace.com</text>
<text transform="translate(58 514) rotate(-32.500) scale(.62 1)">lapulace.com</text>
<text transform="translate(58 665) rotate(-32.500) scale(.62 1)">lapulace.com</text>
<text transform="translate(1169 80) rotate(-32.500) scale(.62 1)">lapulace.com</text>
<text transform="translate(1169 237) rotate(-32.500) scale(.62 1)">lapulace.com</text>
<text transform="translate(1169 379) rotate(-32.500) scale(.62 1)">lapulace.com</text>
<text transform="translate(1168 515) rotate(-32.500) scale(.62 1)">lapulace.com</text>
</g>
<circle cx="1129" cy="613.500" r="82.500" fill="none" stroke="#e61f24" stroke-width="3.800"/>
<path d="M1129 583l7.200 20h21l-17 12.500 6 18-17.200-11-17 11 6-18-17-12.500h21z" fill="#f0282c"/>
<g font-family="Noto Serif CJK SC,Liberation Serif,serif" font-size="23" fill="#d8203c" text-anchor="middle">
<text transform="translate(1075 625) rotate(-102) scale(.85 1.250)" y="8">拉</text>
<text transform="translate(1077 595) rotate(-70) scale(.85 1.250)" y="8">普</text>
<text transform="translate(1095 573) rotate(-40) scale(.85 1.250)" y="8">拉</text>
<text transform="translate(1116 558) rotate(-13) scale(.85 1.250)" y="8">斯</text>
<text transform="translate(1142 555) rotate(13) scale(.85 1.250)" y="8">M</text>
<text transform="translate(1158 565) rotate(31) scale(.85 1.250)" y="8">a</text>
<text transform="translate(1173 578) rotate(51) scale(.85 1.250)" y="8">c</text>
<text transform="translate(1185 597) rotate(74) scale(.85 1.250)" y="8">软</text>
<text transform="translate(1185 625) rotate(101) scale(.85 1.250)" y="8">件</text>
</g>
<text transform="translate(1065 662) scale(.55 1)" font-family="Liberation Sans" font-size="26" fill="#c81e38" letter-spacing="4.600">LapuLace.com</text>
</svg>
</div></body></html>
